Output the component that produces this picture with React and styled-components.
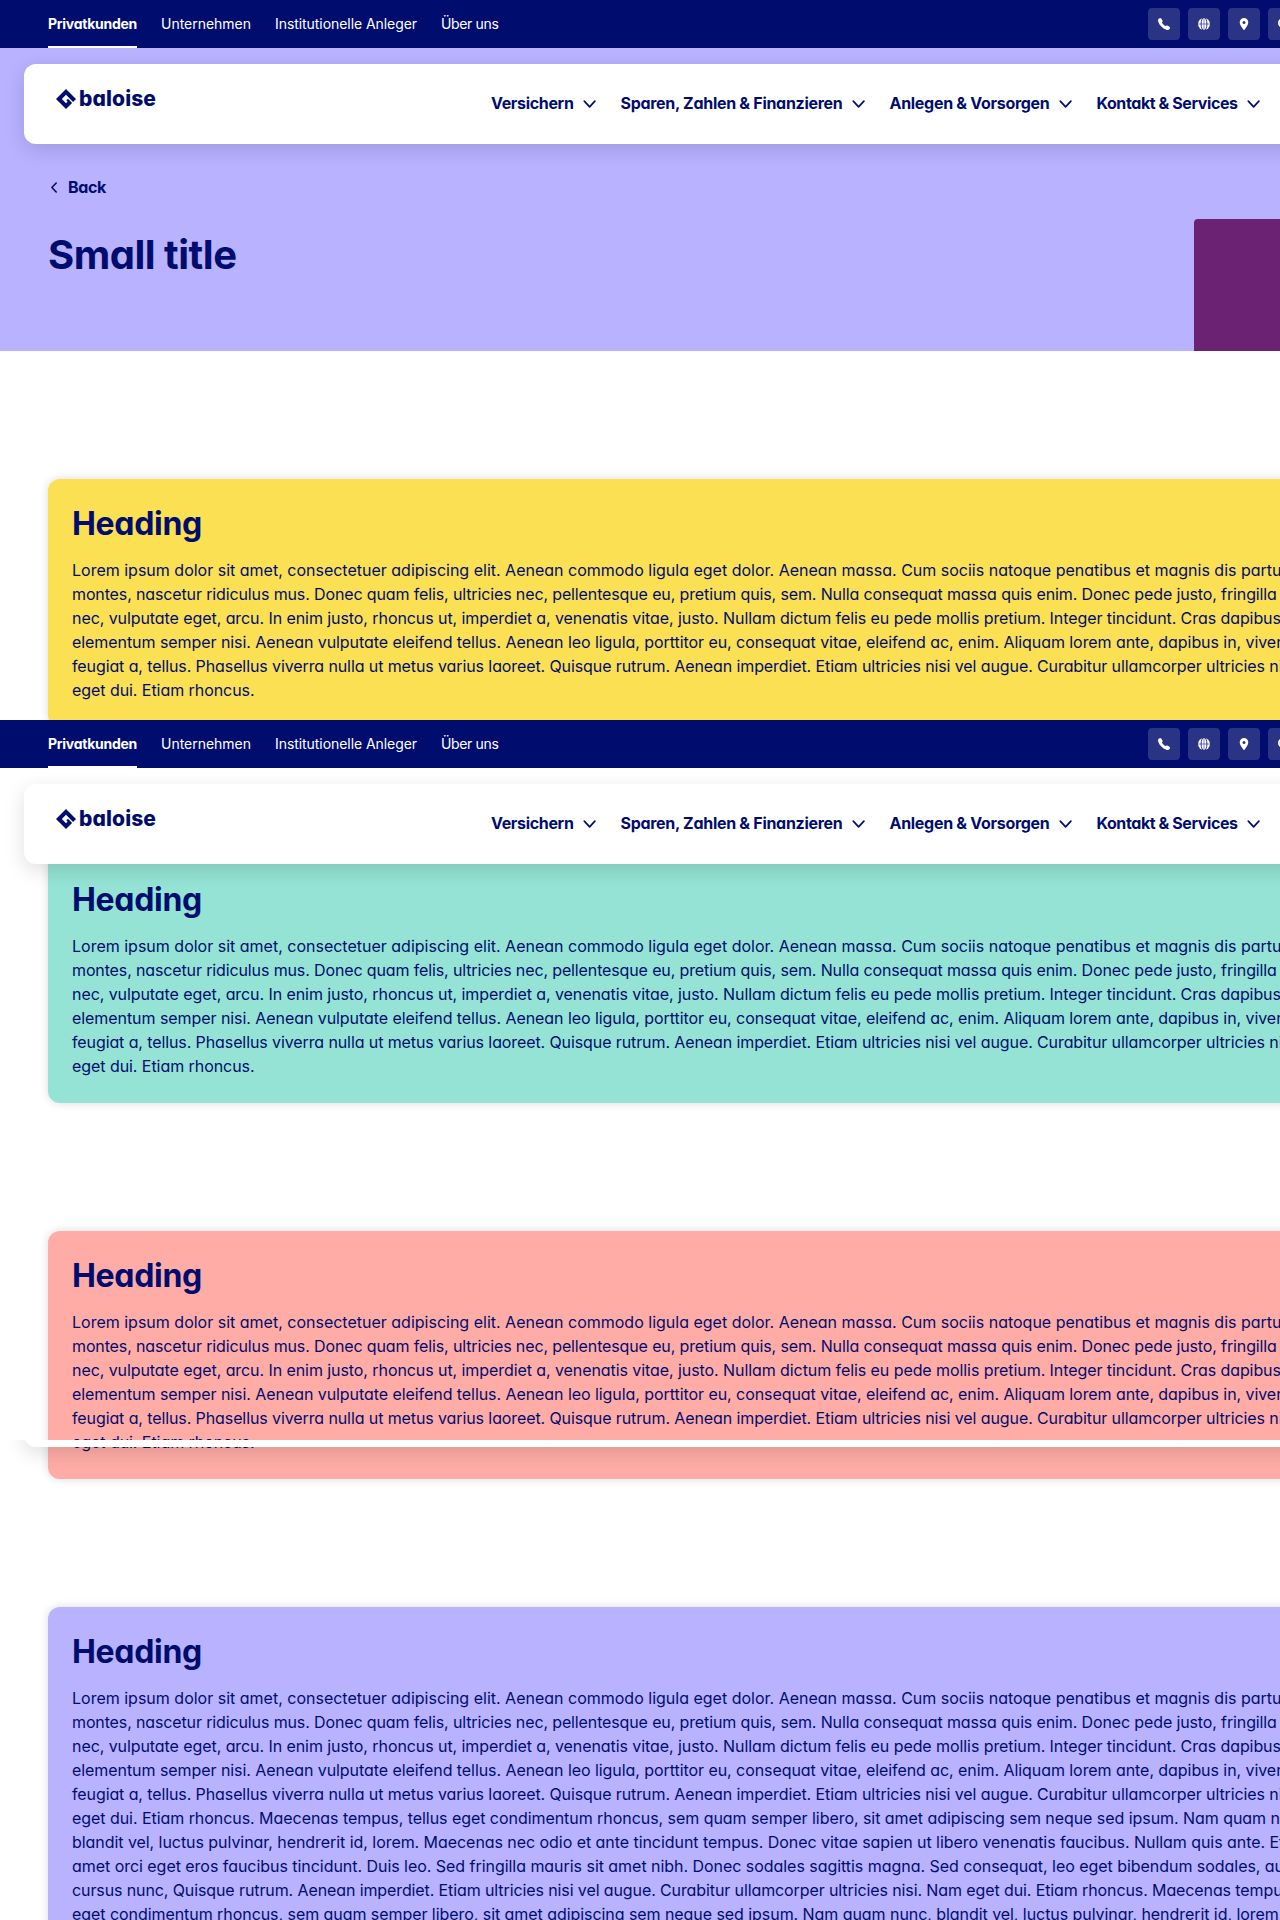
import React from "react";
import styled, { createGlobalStyle } from "styled-components";

const navy = "#000d6e";

const GlobalStyle = createGlobalStyle`
  *, *::before, *::after { box-sizing: border-box; }
  body {
    margin: 0;
    background: #fff;
    color: ${navy};
    font-family: "Inter", "Open Sans", sans-serif;
    font-feature-settings: "cv11";
    font-size: 16px;
    line-height: 24px;
  }
`;

const Page = styled.div`
  position: relative;
  width: 100%;
  height: 1920px;
  overflow: hidden;
`;

const MetaBar = styled.div`
  display: flex;
  justify-content: space-between;
  height: 48px;
  padding-left: 48px;
  background: ${navy};
`;

const Tabs = styled.nav`
  display: flex;
  gap: 24px;
`;

const Tab = styled.a`
  display: flex;
  align-items: center;
  width: ${(p) => p.$width}px;
  height: 48px;
  color: #fff;
  font-size: 14px;
  font-weight: ${(p) => (p.$active ? 700 : 400)};
  letter-spacing: ${(p) => p.$track}px;
  white-space: nowrap;
  box-shadow: ${(p) => (p.$active ? "inset 0 -2px 0 #fff" : "none")};
`;

const Actions = styled.div`
  display: flex;
  align-items: center;
  gap: 8px;
  width: 132px;
  overflow: hidden;
`;

const ActionButton = styled.button`
  display: flex;
  flex: none;
  align-items: center;
  justify-content: center;
  width: 32px;
  height: 32px;
  padding: 0;
  border: 0;
  border-radius: 4px;
  background: #293485;
  color: #fff;
`;

const NavCard = styled.div`
  display: flex;
  width: 1400px;
  height: 80px;
  margin: 16px 0 0 24px;
  padding-left: 32px;
  border-radius: 12px;
  background: #fff;
  box-shadow: 0 6px 20px rgba(0, 0, 0, 0.13);
`;

const Brand = styled.a`
  display: flex;
  align-items: center;
  gap: 3px;
  width: 435px;
  height: 20px;
  margin-top: 25px;
  font-size: 21px;
  font-weight: 800;
  line-height: 20px;
  letter-spacing: 0.1px;
`;

const Wordmark = styled.span`
  margin-top: -1px;
`;

const MainNav = styled.nav`
  display: flex;
  align-items: center;
  gap: 23px;
`;

const NavItem = styled.a`
  display: flex;
  align-items: center;
  gap: 8px;
`;

const NavLabel = styled.span`
  width: ${(p) => p.$width}px;
  margin-top: -2px;
  font-weight: 700;
  letter-spacing: ${(p) => p.$track}px;
  white-space: nowrap;
`;

const Hero = styled.section`
  height: 351px;
  background: #b8b2ff;
`;

const HeroBody = styled.div`
  display: flex;
  justify-content: space-between;
  align-items: flex-end;
  height: 207px;
  padding-left: 48px;
`;

const HeroText = styled.div`
  align-self: flex-start;
  padding-top: 31px;
`;

const BackLink = styled.a`
  display: flex;
  align-items: center;
  gap: 8px;
  height: 24px;
  font-weight: 700;
  letter-spacing: -0.34px;
`;

const Title = styled.h1`
  margin: 32px 0 0;
  font-size: 40px;
  font-weight: 700;
  line-height: 48px;
  letter-spacing: -0.5px;
`;

const HeroBlock = styled.div`
  width: 86px;
  height: 132px;
  border-top-left-radius: 4px;
  background: #6c2273;
`;

const Content = styled.main`
  display: flex;
  flex-direction: column;
  gap: 128px;
  padding: 128px 0 0 48px;
`;

const Card = styled.article`
  width: 1344px;
  padding: 25px 24px;
  border-radius: 12px;
  background: ${(p) => p.$tone};
  box-shadow: 0 0 10px rgba(0, 7, 57, 0.15);
`;

const Heading = styled.h2`
  margin: 0 0 14px;
  font-size: 32px;
  font-weight: 700;
  line-height: 40px;
  letter-spacing: -0.3px;
`;

const Line = styled.span`
  display: block;
  height: 24px;
  letter-spacing: ${(p) => p.$track}px;
  white-space: nowrap;
`;

const StickyHeader = styled.header`
  position: absolute;
  top: 720px;
  left: 0;
  right: 0;
`;

const HeaderRemnant = styled.div`
  position: absolute;
  top: 1440px;
  left: 0;
  right: 0;
  height: 60px;
  overflow: hidden;
`;

const RemnantCard = styled(NavCard)`
  margin-top: -73px;
`;

const PhoneIcon = () => (
  <svg width="12" height="12" viewBox="0 0 12 12" fill="currentColor">
    <path d="M.7.7C1.5-.1 2.500-.2 3.200.6L4.400 2.400c.4.7.2 1.300-.4 2 .8 1.600 2 2.800 3.600 3.700.7-.6 1.400-.8 2.100-.4l1.700 1.100c.8.6.8 1.500.1 2.300-.8.9-1.900 1.100-3.100.7C4.300 10.300 1.600 7.600.300 3.800-.1 2.600-.1 1.500.700.700Z" />
  </svg>
);

const GlobeIcon = () => (
  <svg width="12" height="12" viewBox="0 0 12 12">
    <circle cx="6" cy="6" r="6" fill="currentColor" />
    <g fill="none" stroke="#293485" strokeWidth="1">
      <ellipse cx="6" cy="6" rx="2.900" ry="6.600" />
      <path d="M0 6h12M6 0v12" strokeWidth="0.6" />
    </g>
  </svg>
);

const PinIcon = () => (
  <svg width="12" height="12" viewBox="0 0 12 12" fill="currentColor">
    <path
      fillRule="evenodd"
      d="M6 0a4.300 4.300 0 0 1 4.300 4.300C10.300 7 8.200 9 6.700 11.600a.8.8 0 0 1-1.400 0C3.800 9 1.700 7 1.700 4.300A4.300 4.300 0 0 1 6 0Zm0 3a1.500 1.500 0 1 0 0 3 1.500 1.500 0 0 0 0-3Z"
    />
  </svg>
);

const SearchIcon = () => (
  <svg width="12" height="12" viewBox="0 0 12 12" fill="none" stroke="currentColor" strokeWidth="1.8">
    <circle cx="5" cy="5" r="4.100" />
    <path d="M8 8l3.400 3.400" />
  </svg>
);

const ChevronDown = () => (
  <svg width="16" height="16" viewBox="0 0 16 16" fill="none" stroke="currentColor" strokeWidth="1.7" strokeLinecap="round" strokeLinejoin="round">
    <path d="M2.300 5.200 7.600 10.800l5.300-5.600" />
  </svg>
);

const ChevronLeft = () => (
  <svg width="12" height="12" viewBox="0 0 12 12" fill="none" stroke="currentColor" strokeWidth="1.6" strokeLinecap="round" strokeLinejoin="round">
    <path d="M8.200 2 3.900 6.500l4.300 4.500" />
  </svg>
);

const Diamond = () => (
  <svg width="20" height="20" viewBox="0 0 20 20" fill="currentColor">
    <path d="M10 0l10 10-2.900 2.900L10 5.800 5.800 10l4.200 4.200 1.600-1.600-1.300-1.300L12 9.800l4.100 4.100L10 20 0 10Z" />
  </svg>
);

const tabs = [
  { label: "Privatkunden", width: 89, track: -0.27, active: true },
  { label: "Unternehmen", width: 90, track: -0.02 },
  { label: "Institutionelle Anleger", width: 142, track: -0.06 },
  { label: "Über uns", width: 58, track: -0.35 },
];

const navItems = [
  { label: "Versichern", width: 82.5, track: -0.33 },
  { label: "Sparen, Zahlen & Finanzieren", width: 222, track: -0.29 },
  { label: "Anlegen & Vorsorgen", width: 160, track: -0.29 },
  { label: "Kontakt & Services", width: 141, track: -0.41 },
];

const intro = [
  ["Lorem ipsum dolor sit amet, consectetuer adipiscing elit. Aenean commodo ligula eget dolor. Aenean massa. Cum sociis natoque penatibus et magnis dis parturient", 0],
  ["montes, nascetur ridiculus mus. Donec quam felis, ultricies nec, pellentesque eu, pretium quis, sem. Nulla consequat massa quis enim. Donec pede justo, fringilla vel, aliquet", -0.129],
  ["nec, vulputate eget, arcu. In enim justo, rhoncus ut, imperdiet a, venenatis vitae, justo. Nullam dictum felis eu pede mollis pretium. Integer tincidunt. Cras dapibus. Vivamus", -0.075],
  ["elementum semper nisi. Aenean vulputate eleifend tellus. Aenean leo ligula, porttitor eu, consequat vitae, eleifend ac, enim. Aliquam lorem ante, dapibus in, viverra quis,", -0.064],
  ["feugiat a, tellus. Phasellus viverra nulla ut metus varius laoreet. Quisque rutrum. Aenean imperdiet. Etiam ultricies nisi vel augue. Curabitur ullamcorper ultricies nisi. Nam", -0.101],
];

const shortText = [...intro, ["eget dui. Etiam rhoncus.", -0.06]];

const longText = [
  ...intro,
  ["eget dui. Etiam rhoncus. Maecenas tempus, tellus eget condimentum rhoncus, sem quam semper libero, sit amet adipiscing sem neque sed ipsum. Nam quam nunc,", -0.052],
  ["blandit vel, luctus pulvinar, hendrerit id, lorem. Maecenas nec odio et ante tincidunt tempus. Donec vitae sapien ut libero venenatis faucibus. Nullam quis ante. Etiam sit", -0.054],
  ["amet orci eget eros faucibus tincidunt. Duis leo. Sed fringilla mauris sit amet nibh. Donec sodales sagittis magna. Sed consequat, leo eget bibendum sodales, augue velit", -0.041],
  ["cursus nunc, Quisque rutrum. Aenean imperdiet. Etiam ultricies nisi vel augue. Curabitur ullamcorper ultricies nisi. Nam eget dui. Etiam rhoncus. Maecenas tempus, tellus", -0.105],
  ["eget condimentum rhoncus, sem quam semper libero, sit amet adipiscing sem neque sed ipsum. Nam quam nunc, blandit vel, luctus pulvinar, hendrerit id, lorem. Maecenas", -0.058],
];

const cards = [
  { tone: "#fae052", text: shortText },
  { tone: "#94e3d4", text: shortText },
  { tone: "#ffaca6", text: shortText },
  { tone: "#b8b2ff", text: longText },
];

const HeaderContent = () => (
  <>
    <MetaBar>
      <Tabs>
        {tabs.map((t) => (
          <Tab key={t.label} $width={t.width} $track={t.track} $active={t.active}>
            {t.label}
          </Tab>
        ))}
      </Tabs>
      <Actions>
        <ActionButton><PhoneIcon /></ActionButton>
        <ActionButton><GlobeIcon /></ActionButton>
        <ActionButton><PinIcon /></ActionButton>
        <ActionButton><SearchIcon /></ActionButton>
      </Actions>
    </MetaBar>
    <NavCard>
      <Brand>
        <Diamond />
        <Wordmark>baloise</Wordmark>
      </Brand>
      <MainNav>
        {navItems.map((n) => (
          <NavItem key={n.label}>
            <NavLabel $width={n.width} $track={n.track}>{n.label}</NavLabel>
            <ChevronDown />
          </NavItem>
        ))}
      </MainNav>
    </NavCard>
  </>
);

export default function App() {
  return (
    <Page>
      <GlobalStyle />
      <Hero>
        <HeaderContent />
        <HeroBody>
          <HeroText>
            <BackLink>
              <ChevronLeft />
              Back
            </BackLink>
            <Title>Small title</Title>
          </HeroText>
          <HeroBlock />
        </HeroBody>
      </Hero>
      <Content>
        {cards.map((c) => (
          <Card key={c.tone} $tone={c.tone}>
            <Heading>Heading</Heading>
            {c.text.map(([line, track]) => (
              <Line key={line} $track={track}>{line}</Line>
            ))}
          </Card>
        ))}
      </Content>
      <StickyHeader>
        <HeaderContent />
      </StickyHeader>
      <HeaderRemnant>
        <RemnantCard />
      </HeaderRemnant>
    </Page>
  );
}
